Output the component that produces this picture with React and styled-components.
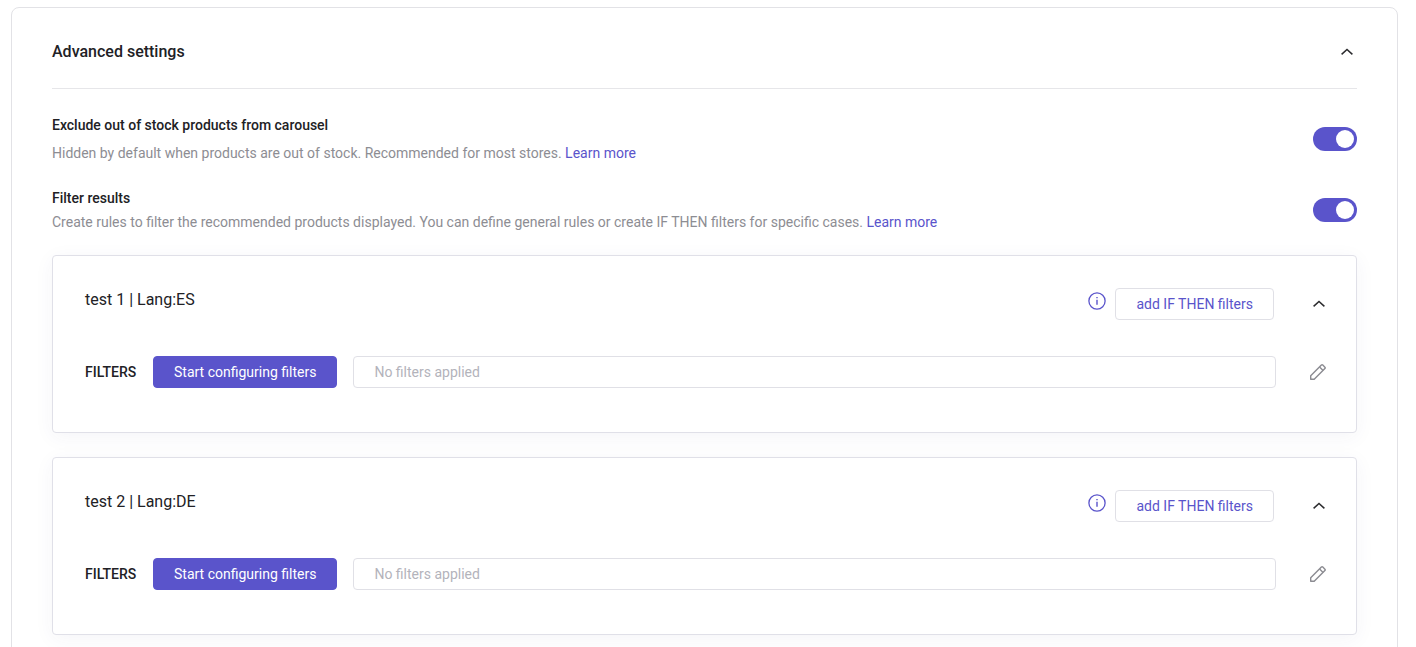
import React, { useState } from 'react';
import styled, { createGlobalStyle } from 'styled-components';

const languages = [
  { id: 1, title: 'test 1 | Lang:ES' },
  { id: 2, title: 'test 2 | Lang:DE' },
];

const Chevron = () => (
  <svg width="14" height="14" viewBox="0 0 14 14" fill="none" stroke="#2b2b2e" strokeWidth="1.5">
    <path d="M1.6 9.4 7 4.4l5.4 5" />
  </svg>
);

const Info = () => (
  <svg width="18" height="18" viewBox="0 0 18 18" fill="none" stroke="#5a54cb">
    <circle cx="9" cy="9" r="8.1" strokeWidth="1.3" />
    <path d="M9 7.8v5M9 5v1.2" strokeWidth="1.4" />
  </svg>
);

const Pencil = () => (
  <svg width="18" height="18" viewBox="0 0 18 18" fill="none" stroke="#8b8b91" strokeWidth="1.4" strokeLinejoin="round">
    <path d="M1.7 16.3v-3.5L12.4 2.1q.7-.7 1.4 0l2.1 2.1q.7.7 0 1.4L5.2 16.3z" />
    <path d="m10.6 3.9 3.5 3.5" />
  </svg>
);

const Toggle = () => {
  const [on, setOn] = useState(true);
  return (
    <Switch type="button" role="switch" aria-checked={on} $on={on} onClick={() => setOn(!on)}>
      <Knob />
    </Switch>
  );
};

const FilterCard = ({ title }) => (
  <Card>
    <CardHeader>
      <CardTitle>{title}</CardTitle>
      <InfoButton aria-label="Info"><Info /></InfoButton>
      <Button>add IF THEN filters</Button>
      <IconButton aria-label="Collapse"><Chevron /></IconButton>
    </CardHeader>
    <FilterRow>
      <Label>FILTERS</Label>
      <Button $primary>Start configuring filters</Button>
      <Applied>No filters applied</Applied>
      <EditButton aria-label="Edit"><Pencil /></EditButton>
    </FilterRow>
  </Card>
);

const App = () => {
  return (
    <>
      <GlobalStyle />
      <Panel>
        <PanelHeader>
          <PanelTitle>Advanced settings</PanelTitle>
          <PanelToggle aria-label="Collapse"><Chevron /></PanelToggle>
        </PanelHeader>
        <Setting $top={26}>
          <SettingText $gap={8}>
            <SettingTitle>Exclude out of stock products from carousel</SettingTitle>
            <Description>
              Hidden by default when products are out of stock. Recommended for most stores. <Link>Learn more</Link>
            </Description>
          </SettingText>
          <Toggle />
        </Setting>
        <Setting $top={25}>
          <SettingText $gap={4}>
            <SettingTitle>Filter results</SettingTitle>
            <Description>
              Create rules to filter the recommended products displayed. You can define general rules or create IF THEN filters for specific cases. <Link>Learn more</Link>
            </Description>
          </SettingText>
          <Toggle />
        </Setting>
        <Cards>
          {languages.map((lang) => (
            <FilterCard key={lang.id} title={lang.title} />
          ))}
        </Cards>
      </Panel>
    </>
  );
};

export default App;

const GlobalStyle = createGlobalStyle`
* {
  box-sizing: border-box;
}
html, body {
  height: 100%;
}
body {
  margin: 0;
  overflow: hidden;
  background: #fff;
  color: #212125;
  font-family: Roboto, sans-serif;
  font-size: 14px;
  line-height: 20px;
}
button {
  font: inherit;
  cursor: pointer;
}
`;

const Panel = styled.section`
margin: 7px 18px 0 11px;
padding: 0 40px 40px;
border: 1px solid #e2e2e6;
border-radius: 8px;
`;

const PanelHeader = styled.header`
display: flex;
align-items: center;
justify-content: space-between;
height: 81px;
padding: 8px 0 0;
border-bottom: 1px solid #e6e6e9;
`;

const PanelTitle = styled.h2`
margin: 0;
font-size: 16px;
font-weight: 500;
line-height: 24px;
`;

const IconButton = styled.button`
display: flex;
align-items: center;
justify-content: center;
width: 24px;
height: 24px;
margin-left: 33px;
padding: 0;
border: 0;
background: none;
`;

const PanelToggle = styled(IconButton)`
width: 20px;
margin-left: 0;
`;

const Setting = styled.div`
display: flex;
align-items: center;
justify-content: space-between;
padding-top: ${({ $top }) => $top}px;
`;

const SettingText = styled.div`
display: flex;
flex-direction: column;
gap: ${({ $gap }) => $gap}px;
`;

const SettingTitle = styled.div`
font-weight: 500;
`;

const Description = styled.div`
color: #8d8d93;
`;

const Link = styled.a`
color: #5a54cb;
cursor: pointer;
`;

const Switch = styled.button`
display: flex;
align-items: center;
justify-content: ${({ $on }) => ($on ? 'flex-end' : 'flex-start')};
width: 44px;
height: 24px;
padding: 3px;
border: 0;
border-radius: 12px;
background: ${({ $on }) => ($on ? '#5a54cb' : '#c8c8ce')};
`;

const Knob = styled.span`
width: 18px;
height: 18px;
border-radius: 50%;
background: #fff;
`;

const Cards = styled.div`
display: flex;
flex-direction: column;
gap: 24px;
margin-top: 23px;
`;

const Card = styled.article`
height: 178px;
padding: 32px 25px 0 32px;
border: 1px solid #e0e0e8;
border-radius: 4px;
background: #fff;
box-shadow: 0 4px 20px rgb(60 60 110 / 5%);
`;

const CardHeader = styled.div`
display: flex;
align-items: center;
height: 32px;
`;

const CardTitle = styled.div`
flex: 1;
padding-bottom: 9px;
font-size: 16px;
line-height: 24px;
`;

const InfoButton = styled(IconButton)`
width: 18px;
height: 18px;
margin: 0 9px 6px 0;
`;

const Button = styled.button`
height: 32px;
padding: 0 20px;
border: 1px solid ${({ $primary }) => ($primary ? '#5a54cb' : '#e0e0e6')};
border-radius: 4px;
background: ${({ $primary }) => ($primary ? '#5a54cb' : '#fff')};
color: ${({ $primary }) => ($primary ? '#fff' : '#5a54cb')};
white-space: nowrap;
`;

const FilterRow = styled.div`
display: flex;
align-items: center;
margin-top: 36px;
padding-right: 1px;
`;

const Label = styled.div`
width: 68px;
font-weight: 500;
`;

const Applied = styled.div`
flex: 1;
height: 32px;
margin-left: 16px;
padding: 5px 20px;
border: 1px solid #e0e0e6;
border-radius: 4px;
color: #b3b3bb;
`;

const EditButton = styled(IconButton)`
margin-left: 30px;
`;
